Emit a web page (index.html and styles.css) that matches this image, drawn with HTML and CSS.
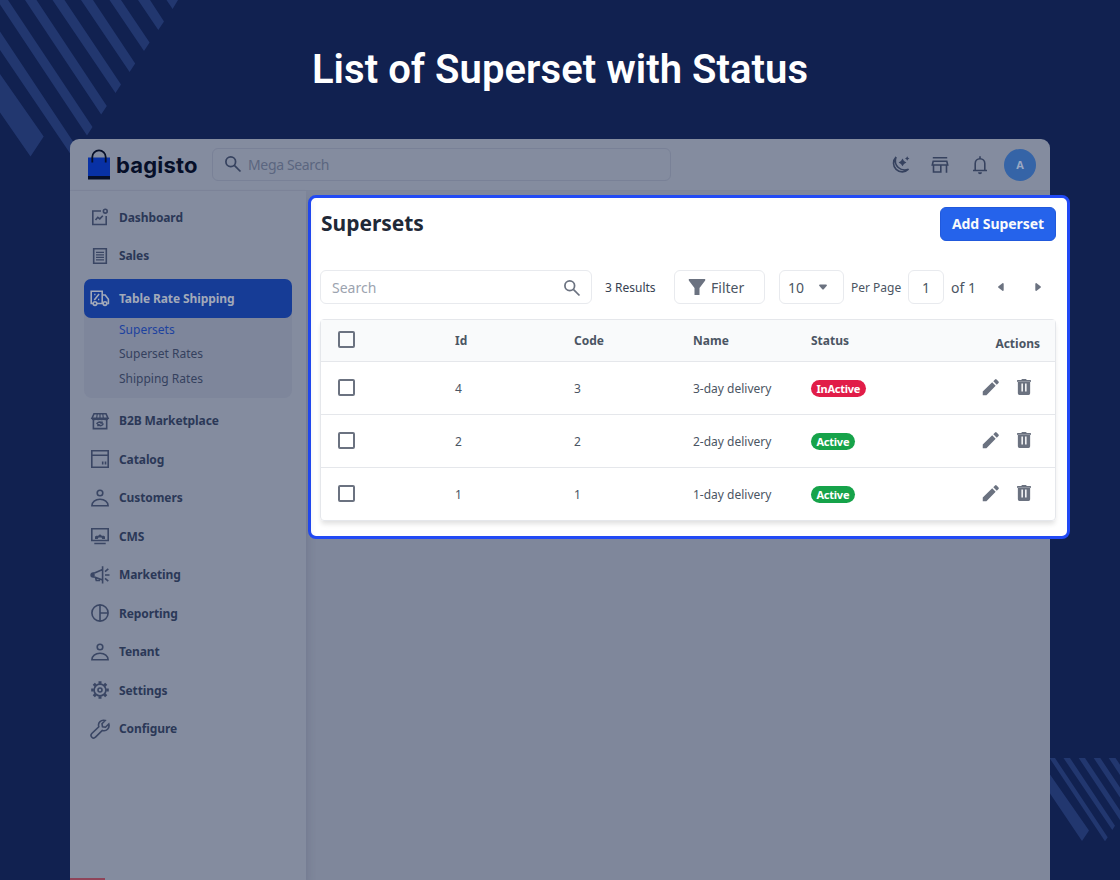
FILE: index.html
```html
<!DOCTYPE html>
<html lang="en">
<head>
  <meta charset="UTF-8" />
  <meta name="viewport" content="width=device-width, initial-scale=1.0" />
  <title>Bagisto – Supersets</title>
  <link rel="stylesheet" href="styles.css">
</head>
<body>
  <svg class="stripes" viewBox="0 0 1120 880" aria-hidden="true">
    <path d="M0 74L43.7 136.5 30.5 156.5 0 112.5zM0 31.5L78 149 72.5 157 0 50zM-3 0H8L92.5 127 87 135.5zM25 0H36.5L106.8 106 101.2 114.5zM52.5 0H64.5L121 84.5 115.5 93zM81 0H93L135.2 63.5 129.6 72zM109.5 0H121L149.6 42.5 144 51zM138 0H150L164 21.5 158.3 30zM166.5 0H178L172.6 9z"/>
    <path d="M1050 774.5L1089 830.5 1082 841 1050 793.5zM1049.5 758H1055L1107.7 837.3 1105 841.3zM1063.5 758H1070L1115 825.8 1112.3 830zM1078.7 758H1085L1120 810.5V820zM1093.7 758H1100.3L1120 787.5V797.5zM1108.7 758H1115.5L1120 764.7V775z"/>
  </svg>

  <!-- icon sprite -->
  <svg class="sprite" aria-hidden="true">
    <symbol id="i-search" viewBox="0 0 24 24"><circle cx="9.3" cy="9.3" r="5.8"/><path d="M13.6 13.6L21 21"/></symbol>
    <symbol id="i-dashboard" viewBox="0 0 20 20"><path d="M11 4H2.800v13.500h13.400V9M5.500 13l2.300-2.700 2 1.600 3-3.200"/><circle cx="15.300" cy="4.200" r="1.900"/></symbol>
    <symbol id="i-sales" viewBox="0 0 20 20"><path d="M3.700 2.700h12.600v14.600H3.700z"/><path class="thin" d="M6 6.300h8M6 8.800h8M6 11.300h8M6 13.800h8"/></symbol>
    <symbol id="i-truck" viewBox="0 0 20 20"><path d="M3.200 15.500H1.200V3.200h11V15.500H7M12.200 7h3l3.200 4.300v4.200h-1.200M4.300 12l4.800-6"/><circle cx="5" cy="15.600" r="1.800"/><circle cx="15" cy="15.600" r="1.800"/><path d="M4.200 6.500h1.300M8 11.500h1.300"/></symbol>
    <symbol id="i-market" viewBox="0 0 20 20"><path d="M3.400 8v9.600h13.300V8M4 2.700h12L18 7.200H2z"/><path class="thin" d="M7.200 3L6.500 8.500M10 3v5.500M12.800 3l.7 5.500M2 7.500c.5 1.500 4 1.500 4.500 0 .5 1.500 3 1.500 3.500 0 .5 1.500 3 1.500 3.500 0 .5 1.500 4 1.500 4.500 0"/><path d="M6.800 13.200c.3-2.200 3.200-2.800 5.200-1.200M12 10.500V12h-1.700M13.200 12.500c-.3 2.200-3.200 2.800-5.200 1.200M8 15.200v-1.500h1.700"/></symbol>
    <symbol id="i-catalog" viewBox="0 0 20 20"><path d="M1.800 1.800h16.400v16.400H1.800zM1.800 6.300h16.400M12.700 12.500v3M15.500 12.500v3"/></symbol>
    <symbol id="i-user" viewBox="0 0 20 20"><circle cx="10" cy="5" r="2.800"/><path d="M1.900 17.800c0-3.800 3.400-6.500 8.100-6.500s8.100 2.700 8.100 6.500z"/></symbol>
    <symbol id="i-cms" viewBox="0 0 20 20"><path d="M1.800 2.800h16.400v11.700H1.800zM4.300 17.500h11.400"/><path class="solid" d="M5 13V10.500l2-1 .8.600L10 8.200l2.200 1.900.8-.6 2 1V13h-2.700l-.8-1.500h-3L7.700 13z"/></symbol>
    <symbol id="i-marketing" viewBox="0 0 20 20"><path d="M12.600 1.200v17.300M12.600 4.500L4.500 8M4.500 12l8.100 3M5.500 12.500l.8 3h3v-1.500M15 10h4.500M15 6.700l3.300-2.900M15 13.300l3.300 2.900"/><path class="solid" d="M1.800 7.500l2.900-.4v5.800l-2.900-.4Q.3 12 .3 10t1.500-2.500z"/></symbol>
    <symbol id="i-reporting" viewBox="0 0 20 20"><circle cx="10" cy="10" r="8.100"/><path d="M10 2v16M10 10h8"/></symbol>
    <symbol id="i-settings" viewBox="0 0 20 20"><circle cx="10" cy="10" r="5.900"/><circle cx="10" cy="10" r="2"/><path class="teeth" d="M10 1.200v2.600M10 16.200v2.600M1.200 10h2.600M16.200 10h2.600M3.800 3.800l1.800 1.800M14.400 14.400l1.800 1.800M3.800 16.200l1.800-1.800M14.400 5.600l1.800-1.800"/></symbol>
    <symbol id="i-wrench" viewBox="0 0 20 20"><path d="M15.200 1.500c-4-1.200-7.700 2-6.400 6.200l-7 6.800c-2.300 2.500 1.200 6.100 3.700 3.700l6.800-6.700c4.200 1.200 7.700-2.300 6.500-6.500l-3.300 3.200-3-.5-.5-2.900z"/></symbol>
    <symbol id="i-moon" viewBox="0 0 24 24"><path d="M8 4A8.300 8.300 0 1 0 20.500 16.200C13 19 5 13 8 4z"/><path class="solid" d="M14.500 5.500l1.500 2.400 2.400 1.500-2.400 1.500-1.500 2.400-1.500-2.400-2.400-1.500L13 7.900zM19.200 3.300l.8 1.400 1.400.8-1.400.8-.8 1.400-.8-1.400-1.400-.8 1.400-.8z"/></symbol>
    <symbol id="i-store" viewBox="0 0 24 24"><path d="M4.800 4.800h14.400M5.200 8.300h13.600l.9 3.700H4.300zM5.500 12v7h7.300V12M18.500 12v7.800"/></symbol>
    <symbol id="i-bell" viewBox="0 0 24 24"><path d="M5 17.500h14M7.200 17.500V10.500a4.800 4.800 0 0 1 9.600 0V17.500M12 3.200v2.300"/><path class="solid" d="M10 19.200h4a2 2 0 0 1-4 0z"/></symbol>
    <symbol id="i-pencil" viewBox="0 0 24 24"><path class="solid" d="M3 17L13.300 6.900l3.800 3.800L7 21H3zM14.500 5.700l1.900-1.900a1.200 1.200 0 0 1 1.700 0l2.100 2.100a1.200 1.200 0 0 1 0 1.700l-1.900 1.900z"/></symbol>
    <symbol id="i-trash" viewBox="0 0 24 24"><path class="solid" fill-rule="evenodd" d="M4.500 4.300H9l.8-.9h4.400l.8.900h4.500v2.200h-15zM5.300 6.300h13.400v12.600a1.700 1.700 0 0 1-1.700 1.700H7a1.700 1.700 0 0 1-1.700-1.700zM9.200 8.300v8.500h1.600V8.300zM13.200 8.300v8.500h1.600V8.300z"/></symbol>
  </svg>

  <h1 class="title">List of Superset with Status</h1>

  <div class="window">
    <header class="topbar">
      <div class="logo">
        <svg width="24" height="32" viewBox="0 0 24 32"><path fill="#0831a5" d="M1 8.500h22V27H1z"/><path fill="#060f29" d="M1 27h22v3.500H1z"/><path d="M5.300 13.500V8a6.700 6.700 0 0 1 13.400 0v5.500" fill="none" stroke="#060f29" stroke-width="1.800"/></svg>
        <span>bagisto</span>
      </div>
      <div class="mega"><svg class="icon"><use href="#i-search"/></svg><span>Mega Search</span></div>
      <div class="tools">
        <svg class="icon"><use href="#i-moon"/></svg>
        <svg class="icon"><use href="#i-store"/></svg>
        <svg class="icon"><use href="#i-bell"/></svg>
        <span class="avatar">A</span>
      </div>
    </header>

    <div class="body">
      <nav class="sidebar">
        <a class="item"><svg class="icon"><use href="#i-dashboard"/></svg><span>Dashboard</span></a>
        <a class="item"><svg class="icon"><use href="#i-sales"/></svg><span>Sales</span></a>
        <div class="group">
          <a class="item active"><svg class="icon"><use href="#i-truck"/></svg><span>Table Rate Shipping</span></a>
          <div class="sub">
            <a class="current">Supersets</a>
            <a>Superset Rates</a>
            <a>Shipping Rates</a>
          </div>
        </div>
        <a class="item"><svg class="icon"><use href="#i-market"/></svg><span>B2B Marketplace</span></a>
        <a class="item"><svg class="icon"><use href="#i-catalog"/></svg><span>Catalog</span></a>
        <a class="item"><svg class="icon"><use href="#i-user"/></svg><span>Customers</span></a>
        <a class="item"><svg class="icon"><use href="#i-cms"/></svg><span>CMS</span></a>
        <a class="item"><svg class="icon"><use href="#i-marketing"/></svg><span>Marketing</span></a>
        <a class="item"><svg class="icon"><use href="#i-reporting"/></svg><span>Reporting</span></a>
        <a class="item"><svg class="icon"><use href="#i-user"/></svg><span>Tenant</span></a>
        <a class="item"><svg class="icon"><use href="#i-settings"/></svg><span>Settings</span></a>
        <a class="item"><svg class="icon"><use href="#i-wrench"/></svg><span>Configure</span></a>
        <div class="debug"></div>
      </nav>
      <div class="content"></div>
    </div>
  </div>

  <main class="panel">
    <div class="panel-head">
      <h2>Supersets</h2>
      <button class="add" type="button">Add Superset</button>
    </div>

    <div class="toolbar">
      <div class="box search"><span>Search</span><svg class="icon"><use href="#i-search"/></svg></div>
      <span class="results">3 Results</span>
      <div class="box filter"><svg width="18" height="18" viewBox="0 0 18 18"><path d="M.8 1h16.400v1.500L11.500 10v7h-5v-7L.8 2.500z"/></svg><span>Filter</span></div>
      <div class="box limit"><span>10</span><svg width="8" height="6" viewBox="0 0 8 6"><path d="M.6.500h6.800L8 1.500 4.500 5.500h-1L0 1.500z"/></svg></div>
      <span class="per">Per Page</span>
      <div class="box page">1</div>
      <span class="of">of 1</span>
      <svg class="arrow" width="6" height="8" viewBox="0 0 6 8"><path d="M5.700.5v7L4.700 8 .2 4.500v-1L4.700 0z"/></svg>
      <svg class="arrow" width="6" height="8" viewBox="0 0 6 8"><path d="M.3.500v7l1 .5 4.500-3.500v-1L1.300 0z"/></svg>
    </div>

    <div class="table">
      <div class="row head">
        <i class="check"></i><span>Id</span><span>Code</span><span>Name</span><span>Status</span><span class="actions">Actions</span>
      </div>
      <div class="row">
        <i class="check"></i><span>4</span><span>3</span><span>3-day delivery</span><span><b class="badge off">InActive</b></span>
        <span class="actions"><svg class="icon"><use href="#i-pencil"/></svg><svg class="icon"><use href="#i-trash"/></svg></span>
      </div>
      <div class="row">
        <i class="check"></i><span>2</span><span>2</span><span>2-day delivery</span><span><b class="badge">Active</b></span>
        <span class="actions"><svg class="icon"><use href="#i-pencil"/></svg><svg class="icon"><use href="#i-trash"/></svg></span>
      </div>
      <div class="row">
        <i class="check"></i><span>1</span><span>1</span><span>1-day delivery</span><span><b class="badge">Active</b></span>
        <span class="actions"><svg class="icon"><use href="#i-pencil"/></svg><svg class="icon"><use href="#i-trash"/></svg></span>
      </div>
    </div>
  </main>
</body>
</html>
```
FILE: styles.css
```css
*,*::before,*::after{box-sizing:border-box;margin:0;padding:0}
body{position:relative;width:1120px;height:880px;overflow:hidden;background:#112150;font-family:'Noto Sans','Open Sans',sans-serif;font-size:12px;color:#4b5563}
.sprite{position:absolute;width:0;height:0}
.stripes{position:absolute;left:0;top:0;width:1120px;height:880px;fill:#22376f}
.icon{width:20px;height:20px;flex:none;fill:none;stroke:currentColor;stroke-width:1.6}
.solid{fill:currentColor;stroke:none}
.thin{stroke-width:1.2}
.teeth{stroke-width:3}

.title{position:relative;height:139px;padding-top:46px;text-align:center;font:600 40px/48px Roboto,sans-serif;letter-spacing:.05px;color:#fff}

/* dimmed admin window */
.window{position:relative;width:980px;height:741px;margin-left:70px;display:flex;flex-direction:column;border-radius:9px 9px 0 0;overflow:hidden;background:#848c9f}
.topbar{height:52px;display:flex;align-items:center;padding:0 14px 0 17px;border-bottom:1px solid #7d859a;color:#36425f}
.logo{display:flex;align-items:center;gap:5px;width:125px;color:#060f29;font:700 22px/30px Inter,sans-serif}
.logo span{padding-top:1px;letter-spacing:.2px}
.mega{display:flex;align-items:center;gap:5px;width:459px;height:33px;padding-left:10px;border:1px solid #798197;border-radius:6px;font-size:14px;letter-spacing:-.35px;color:#5b6680}
.mega .icon{color:#36425f}
.mega .icon,.search .icon{margin-top:-1px;stroke-width:2.1}
.tools{margin-left:auto;display:flex;align-items:center;gap:16px}
.tools .icon{width:24px;height:24px}
.avatar{width:32px;height:32px;margin-left:-4px;border-radius:50%;background:#3564a7;color:#9aa8c3;font-size:11px;font-weight:700;line-height:32px;text-align:center}

.body{flex:1;display:flex}
.sidebar{position:relative;z-index:1;width:236px;padding:7px 14px 0 14px;display:flex;flex-direction:column;box-shadow:0 8px 10px 0 rgba(40,50,80,.2)}
.item{display:flex;align-items:center;gap:9px;height:38.5px;flex:none;padding-left:6px;border-radius:7px;font-weight:700;letter-spacing:-.1px;color:#2b3857}
.item .icon{color:#3a4664}
.item.active,.item.active .icon{background:#163c96;color:#a2a9b9}
.group{margin:4px 0 3.500px;border-radius:8px;background:#7e869b}
.sub{display:flex;flex-direction:column;height:80.500px;padding-left:35px}
.sub a{height:24.500px;line-height:24.500px;color:#35415e}
.sub .current{color:#1d429f}
.debug{width:35px;height:2px;margin:auto 0 0 -14px;background:#8f4459}
.content{flex:1;background:#7f879b}

/* highlighted panel */
.panel{position:absolute;left:308px;top:195px;width:762px;height:344px;padding:8px 11px 0 9px;border:3px solid #2149f5;border-radius:8px;background:#fff}
.panel-head{display:flex;justify-content:space-between;height:64px}
.panel h2{padding-left:1px;font-size:21px;line-height:34px;letter-spacing:-.03px;color:#1f2937}
.add{width:116px;height:34px;margin-top:1px;padding-bottom:2px;border:1px solid #2159dc;border-radius:6px;background:#2563eb;color:#f9fafb;font:700 14px 'Noto Sans',sans-serif;letter-spacing:-.05px;white-space:nowrap}
.toolbar{display:flex;align-items:center;height:34px;font-size:14px}
.box{display:flex;align-items:center;height:34px;border:1px solid #e8eaee;border-radius:6px}
.search{width:272px;justify-content:space-between;padding:0 9px 0 11px;color:#9ca3af}
.search .icon{margin-top:1px;color:#6b7280}
.results{width:69px;margin-left:13px;font-size:12px;color:#374151}
.filter{width:91px;padding-left:13px;gap:5px}
.toolbar svg{flex:none}
.filter svg,.limit svg,.arrow{fill:#6b7280}
.limit{width:65px;margin-left:14px;padding:0 16px 0 8px;justify-content:space-between}
.per{width:50px;margin:0 7px;font-size:12px;white-space:nowrap}
.page{width:36px;justify-content:center}
.of{width:47px;margin-left:7px;white-space:nowrap}
.arrow + .arrow{margin-left:31px}

.table{width:736px;margin-top:15px;border:1px solid #e5e7eb;border-radius:4px;box-shadow:0 4px 5px -1px rgba(0,0,0,.12)}
.row{display:grid;grid-template-columns:117px 119px 119px 118px 1fr auto;align-items:center;height:53px;padding:0 15px 0 17px;border-top:1px solid #e5e7eb}
.row.head{height:41px;border-top:0;background:#f9fafb;font-weight:700}
.head .actions{padding-top:6px}
.check{width:17px;height:17px;margin-top:-2px;border:2px solid #6b7280;border-radius:2px}
.row .actions{display:flex;gap:11px}
.actions .icon{width:22px;height:22px;margin-top:-2px;color:#6b7280}
.row:not(.head) .actions{padding-right:5px}
.badge{display:inline-block;height:17px;padding:0 5.500px;border-radius:9px;background:#16a34a;color:#fff;font-size:11px;line-height:17px;letter-spacing:-.25px}
.badge.off{background:#e11d48}
```
